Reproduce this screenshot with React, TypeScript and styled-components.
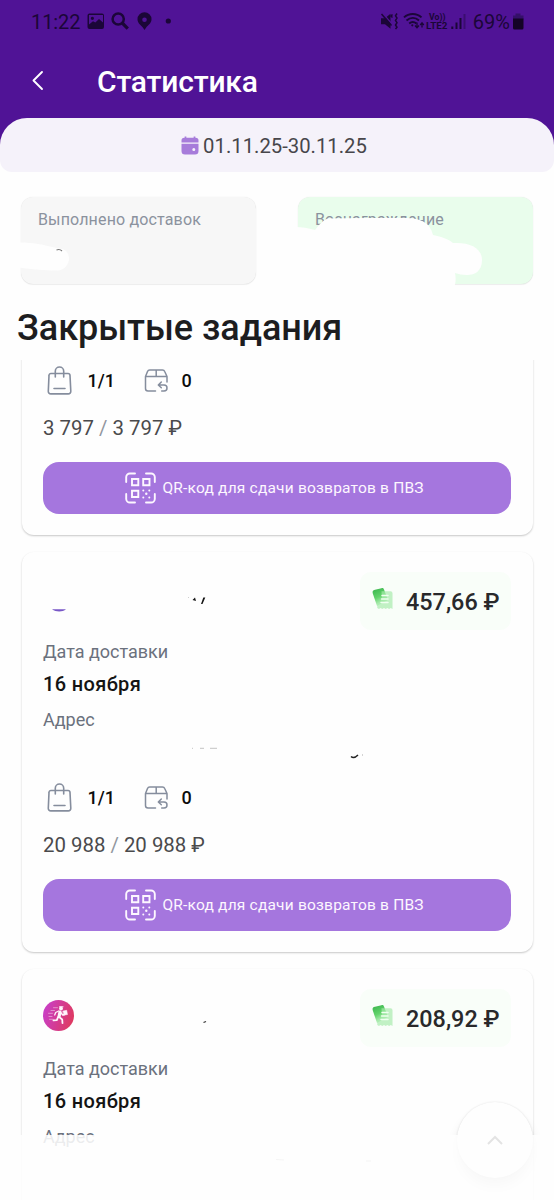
import React from "react";
import styled, { createGlobalStyle } from "styled-components";

const Global = createGlobalStyle`
  * { box-sizing: border-box; }
  body { margin: 0; background: #fefefe; font-family: Roboto, "Liberation Sans", sans-serif; }
`;

const Screen = styled.main`
  position: relative;
  width: 554px;
  height: 1200px;
  overflow: hidden;
  display: flex;
  flex-direction: column;
  background: #fefefe;
`;
const Top = styled.header`
  height: 146px;
  flex: none;
  background: #501396;
`;
const StatusBar = styled.div`
  height: 44px;
  padding: 0 29px 0 31px;
  display: flex;
  justify-content: space-between;
  color: #1b0638;
  font-size: 20px;
  line-height: 45px;
`;
const StatusGroup = styled.div`
  display: flex;
`;
const Clock = styled.span`
  width: 55px;
  letter-spacing: -0.1px;
`;
const Charge = styled.span`
  margin-right: 1px;
`;
const TitleBar = styled.div`
  display: flex;
  align-items: center;
  height: 74px;
  padding-left: 28px;
`;
const Title = styled.h1`
  margin: 1px 0 0 50px;
  color: #fff;
  font-size: 30px;
  line-height: 40px;
  font-weight: 500;
  letter-spacing: -0.2px;
`;
const Period = styled.div`
  flex: none;
  height: 54px;
  margin-top: -28px;
  border-radius: 27px 27px 12px 12px;
  background: #f5f2fa;
  display: flex;
  justify-content: center;
  align-items: center;
  gap: 4px;
  padding: 2px 6px 0 0;
  color: #47464b;
  font-size: 20.3px;
`;
const Stats = styled.section`
  flex: none;
  display: flex;
  justify-content: space-between;
  height: 87px;
  margin: 24.5px 21px 0;
`;
const Stat = styled.div<{ $green?: boolean }>`
  position: relative;
  width: 235px;
  padding: 11px 17px;
  border-radius: 12px;
  background: ${(p) => (p.$green ? "#e9fdec" : "#f7f7f7")};
  box-shadow: 0 0 1px rgba(0, 0, 0, 0.12), 0 1px 1px rgba(0, 0, 0, 0.06);
  color: #8b929e;
  font-size: 16px;
  letter-spacing: 0.15px;
  line-height: 24px;
`;
const Brush = styled.svg`
  position: absolute;
  overflow: visible;
  left: 0;
  top: 0;
`;
const Heading = styled.h2`
  flex: none;
  margin: 23.5px 0 0 17px;
  height: 53px;
  font-size: 36px;
  line-height: 42px;
  font-weight: 500;
  letter-spacing: -0.05px;
  color: #1d1d1f;
`;
const List = styled.section`
  flex: 1;
  min-height: 0;
  overflow: hidden;
`;
const Scroll = styled.div`
  display: flex;
  flex-direction: column;
  gap: 17px;
  margin: -225px 21px 0 22px;
`;
const Card = styled.article`
  position: relative;
  height: 400px;
  padding: 20px 22px 0 21px;
  border-radius: 12px;
  background: #fefefe;
  box-shadow: 0 1px 2px rgba(0, 0, 0, 0.22);
`;
const CardHead = styled.div`
  display: flex;
  justify-content: space-between;
  height: 58px;
  margin-bottom: 10px;
`;
const Courier = styled.div`
  padding-top: 10.5px;
`;
const Reward = styled.div`
  margin-left: auto;
  width: 151px;
  height: 58px;
  padding: 15px 0 0 12px;
  border-radius: 11px;
  background: #f9fef9;
  display: flex;
  align-items: flex-start;
  gap: 12px;
  color: #29292b;
  font-size: 23.4px;
  line-height: 31px;
  font-weight: 500;
  white-space: nowrap;
`;
const Label = styled.div`
  height: 24px;
  line-height: 24px;
  color: #6b717d;
  font-size: 18px;
`;
const DateText = styled.div`
  margin: 6px 0 10px;
  line-height: 28px;
  color: #141414;
  font-size: 20px;
  font-weight: 500;
  letter-spacing: 0.35px;
`;
const Address = styled.div`
  height: 50px;
`;
const Counts = styled.div`
  display: flex;
  align-items: center;
  height: 32px;
  color: #0c0c0c;
  font-size: 18px;
  font-weight: 500;
`;
const Count = styled.span`
  width: 68px;
  padding: 0 0 2px 12.5px;
`;
const Sum = styled.div`
  margin: 19px 0 22px;
  line-height: 24px;
  height: 24px;
  color: #4a4a4c;
  font-size: 20.4px;
  white-space: pre;
`;
const Slash = styled.span`
  color: #92979f;
`;
const QrButton = styled.button`
  width: 468px;
  height: 52px;
  border: 0;
  border-radius: 16px;
  background: #a576de;
  display: flex;
  align-items: center;
  gap: 6.5px;
  padding: 0 0 0 82px;
  color: #fdf7ff;
  font-family: inherit;
  font-size: 15.5px;
  letter-spacing: 0.2px;
  white-space: nowrap;
`;
const Veil = styled.div`
  position: absolute;
  left: 0;
  right: 0;
  bottom: 0;
  height: 65px;
  background: rgba(254, 254, 254, 0.87);
`;
const UpButton = styled.button`
  position: absolute;
  right: 21px;
  bottom: 22px;
  width: 76px;
  height: 76px;
  padding: 0;
  border: 0;
  border-radius: 50%;
  background: #fefefe;
  box-shadow: 0 0 2px rgba(0, 0, 0, 0.12), 0 10px 14px -3px rgba(0, 0, 0, 0.2);
  display: flex;
  align-items: center;
  justify-content: center;
`;

const StatusLeft = () => (
  <svg width="90" height="44" viewBox="87 0 90 44" fill="none">
    <path fill="#1b0638" fillRule="evenodd" d="M90.5 13.5h12.5a2 2 0 0 1 2 2v11.5a2 2 0 0 1-2 2H90.5a2 2 0 0 1-2-2V15.5a2 2 0 0 1 2-2zM90 24.5l4-3.2 2.3 1.3 3.7-3.7 4 3.7V15H90zM93.4 16.7a1.6 1.6 0 1 1 0 3.2 1.6 1.6 0 0 1 0-3.2z" />
    <circle cx="119.2" cy="19" r="5.6" stroke="#1b0638" strokeWidth="2.5" />
    <path d="M123.200 23l5.600 5.600" stroke="#1b0638" strokeWidth="3.200" />
    <path fill="#1b0638" fillRule="evenodd" d="M145.500 12.300a7 7 0 0 1 7 7c0 4-3.300 5.600-5.300 8.300L145.500 30l-1.700-2.400c-2-2.700-5.300-4.300-5.300-8.300a7 7 0 0 1 7-7zm0 5.200a2.300 2.300 0 1 0 0 4.600 2.300 2.300 0 0 0 0-4.600z" />
    <circle cx="169.300" cy="21" r="2.600" fill="#1b0638" />
  </svg>
);
const StatusRight = () => (
  <svg width="93" height="44" viewBox="380 0 93 44" fill="none" stroke="#1b0638">
    <path d="M381 18.300h4l5.500-4.500v15l-5.500-4.500h-4z" fill="#1b0638" stroke="none" />
    <path d="M382.500 13l9.500 11" stroke="#501396" strokeWidth="1.200" />
    <path d="M381.500 14l10 11.500" strokeWidth="1.500" />
    <path d="M392.500 14.500l-1.500 1.500 1.500 1.500M397 13.500l-1.500 2.300 1.500 2.300-1.500 2.300 1.500 2.300-1.500 2.300 1.500 2.300-1.500 1.800" strokeWidth="1.500" />
    <path d="M404 17.400c5-4.600 12.500-4.600 17.500 0M406.500 20.500c4-3.400 8.800-3.400 12.500 0M409.200 23.500c2.300-1.900 5-1.900 7.200 0" strokeWidth="1.900" />
    <circle cx="412.300" cy="25.300" r="1.100" fill="#1b0638" stroke="none" />
    <path d="M417 22.500v5M415 25.500l2 2.300 2-2.300M422 27.500v-5M420.200 25l1.800-2.300 1.800 2.300" strokeWidth="1.300" />
    <g fill="#1b0638" stroke="none" fontFamily="Roboto, sans-serif" fontWeight="700">
      <text x="429" y="19.600" fontSize="8.500" textLength="16.500" lengthAdjust="spacingAndGlyphs">Vo))</text>
      <text x="426" y="28.800" fontSize="9" textLength="21.500" lengthAdjust="spacingAndGlyphs">LTE2</text>
    </g>
    <path d="M452.300 29v-2.600M456.500 29v-6.500M460.500 29v-11" strokeWidth="2" />
    <path d="M464.500 29V14" strokeWidth="2" opacity=".4" />
  </svg>
);
const Battery = () => (
  <svg width="14" height="44" viewBox="0 0 14 44">
    <path d="M4.500 13.500h5v2h3v4H2v-4h2.500z" fill="#341069" />
    <path d="M2 18.500H12.500V28a1.500 1.500 0 0 1-1.500 1.500H3.500A1.500 1.500 0 0 1 2 28z" fill="#140326" />
  </svg>
);
const Calendar = () => (
  <svg width="18" height="20" viewBox="0 0 18 20">
    <path d="M4.500 .5v3M13.500 .5v3" stroke="#a77cda" strokeWidth="1.700" />
    <path d="M0.500 6.500V4.500a2.800 2.800 0 0 1 2.800-2.800h11.400A2.800 2.800 0 0 1 17.500 4.500v2z" fill="#a77cda" />
    <path fillRule="evenodd" d="M.500 7.800h17v7.200a3.500 3.500 0 0 1-3.500 3.500H4a3.500 3.500 0 0 1-3.500-3.500zM12.800 12a1.500 1.500 0 1 0 0 3 1.500 1.500 0 0 0 0-3z" fill="#a77cda" />
  </svg>
);
const Receipt = () => (
  <svg width="22" height="24" viewBox="0 0 22 24">
    <defs>
      <linearGradient id="leaf" x1="0" y1="0" x2=".4" y2="1">
        <stop offset="0" stopColor="#37b34b" />
        <stop offset=".55" stopColor="#62d36b" />
        <stop offset="1" stopColor="#c9f5cb" />
      </linearGradient>
    </defs>
    <path d="M3 2.800L9.500 1.200c1.200-.300 2 .200 2.500 1.300l4 10.400L5 19 .800 6.500C.200 4.300.800 3.300 3 2.800z" fill="url(#leaf)" />
    <path d="M9.500 4.200H18.500a2 2 0 0 1 2 2V22l-1.700-1-1.700 1-1.700-1-1.700 1-1.700-1-1.700 1-1.700-1-1.700 1-1.600-1V17c2.500-1 4-3 4.500-6z" fill="#a6eaab" fillOpacity=".68" />
    <path d="M10 8.500h6M9.500 12h6.500M9 15.500h7" stroke="#effff0" strokeWidth="1.500" strokeLinecap="round" />
  </svg>
);
const Bag = () => (
  <svg width="32" height="32" viewBox="0 0 32 32" fill="none" stroke="#858d9d" strokeWidth="1.600" strokeLinecap="round" strokeLinejoin="round">
    <path d="M8 8.500h17a2 2 0 0 1 2 1.900l.800 15.800a2.500 2.500 0 0 1-2.500 2.700H7.800a2.500 2.500 0 0 1-2.500-2.700l.700-15.800A1.900 1.900 0 0 1 8 8.500z" />
    <path d="M12.300 12V6.200a4.200 4.200 0 0 1 8.400 0V12M11 23.500h11" />
  </svg>
);
const Return = () => (
  <svg width="26" height="26" viewBox="0 0 26 26" fill="none" stroke="#858d9d" strokeWidth="1.500" strokeLinecap="round" strokeLinejoin="round">
    <path d="M12.500 23H5A2.500 2.500 0 0 1 2.500 20.500V8.500l2-5A2.400 2.400 0 0 1 6.700 2h12.800a2.400 2.400 0 0 1 2.200 1.500L24 8.500V14M2.700 8.500h21M13.200 2v6.500" />
    <path d="M18.300 14L15.300 17l3 2.800M15.500 17h5.500a3 3 0 0 1 0 6h-2.300" />
  </svg>
);
const Qr = () => (
  <svg width="31" height="32" viewBox="0 0 31 32" fill="none" stroke="#fdf7ff">
    <path d="M1.200 10V5A3.700 3.700 0 0 1 5 1.500h5M21 1.500h5A3.700 3.700 0 0 1 29.800 5v5M29.800 22v5a3.700 3.700 0 0 1-3.800 3.500h-5M10 30.500H5A3.700 3.700 0 0 1 1.200 27v-5" strokeWidth="1.900" strokeLinecap="round" />
    <path d="M7 7h6.300v6.300H7zM18.200 7h6.300v6.300h-6.300zM7 18.700h6.300V25H7z" strokeWidth="1.900" />
    <g fill="#fdf7ff" stroke="none">
      <circle cx="18.300" cy="18.500" r="1" /><circle cx="24.300" cy="18.500" r="1" /><circle cx="21.300" cy="21.800" r="1.200" />
      <circle cx="18.300" cy="25.500" r="1" /><circle cx="24.300" cy="25.500" r="1" />
    </g>
  </svg>
);
const Runner = () => (
  <svg width="31" height="31" viewBox="0 0 31 31" fill="none" stroke="#fff5fb" strokeLinecap="round" strokeLinejoin="round">
    <defs>
      <linearGradient id="courier" x1="0" y1=".3" x2="1" y2=".6">
        <stop offset="0" stopColor="#c83fc9" />
        <stop offset="1" stopColor="#df395f" />
      </linearGradient>
    </defs>
    <circle cx="15.500" cy="15.500" r="15.500" fill="url(#courier)" stroke="none" />
    <path d="M10.500 7.700h4M8 10.500h3.500M5.500 13.300h4M6 16.500h3M6.500 19.300h3.500" strokeWidth=".6" opacity=".75" />
    <circle cx="18" cy="8.500" r="1.900" fill="#fff5fb" stroke="none" />
    <path d="M16.500 6.800h3.500" strokeWidth="1" />
    <path d="M17 12l-.8 4" strokeWidth="3.200" />
    <path d="M15.700 11l-3 1.500-1 2.500M17.700 12.500l2 2.500 2-.5" strokeWidth="1.300" />
    <path d="M15.200 16.800l-1.400 3.400-3.300.2M16.500 17.300l2.700 2.200.3 3.700" strokeWidth="1.800" />
    <path d="M20 11l3.700-.7.800 4.200-3.700.7z" fill="#fff5fb" strokeWidth=".5" />
  </svg>
);

type Task = { sum: string; reward: string; marks?: React.ReactNode; courier?: boolean };

const tasks: Task[] = [
  { sum: "3 797", reward: "457,66" },
  {
    sum: "20 988",
    reward: "457,66",
    marks: (
      <>
        <path d="M30 57.300h14c-3.500 3-10 3-14 0z" fill="#7857c7" />
        <path d="M170.500 48l2.500-2.500 1 3.500zM179 52l2.300-6.500h2L180.500 52z" fill="#151515" />
        <path d="M166 45.500h1M170 196.300h1M178 196.300h4M188 196.300h7" stroke="#cfcfcf" strokeWidth="1.200" />
        <path d="M329 204.500c2 1.800 4 1.500 7-1.500" fill="none" stroke="#222" strokeWidth="1.500" />
        <path d="M340 203h1" stroke="#aaa" />
      </>
    ),
  },
  {
    sum: "20 988",
    reward: "208,92",
    courier: true,
    marks: (
      <>
        <path d="M181.500 53.500l2.500-1" stroke="#333" strokeWidth="1.300" />
        <path d="M254 190.500l8 .5M344 192h5" stroke="#b5b5b5" />
      </>
    ),
  },
];

const TaskCard = ({ sum, reward, marks, courier }: Task) => (
  <Card>
    <CardHead>
      {courier && <Courier><Runner /></Courier>}
      <Reward><Receipt /><span>{reward} ₽</span></Reward>
    </CardHead>
    <Label>Дата доставки</Label>
    <DateText>16 ноября</DateText>
    <Label>Адрес</Label>
    <Address />
    <Counts>
      <Bag />
      <Count>1/1</Count>
      <Return />
      <Count>0</Count>
    </Counts>
    <Sum>{sum} <Slash>/</Slash> {sum} ₽</Sum>
    <QrButton><Qr />QR-код для сдачи возвратов в ПВЗ</QrButton>
    {marks && <Brush width="511" height="400" viewBox="0 0 511 400">{marks}</Brush>}
  </Card>
);

export default function App() {
  return (
    <Screen>
      <Global />
      <Top>
        <StatusBar>
          <StatusGroup><Clock>11:22</Clock><StatusLeft /></StatusGroup>
          <StatusGroup><StatusRight /><Charge>69%</Charge><Battery /></StatusGroup>
        </StatusBar>
        <TitleBar>
          <svg width="19" height="24" viewBox="0 0 19 24" fill="none">
            <path d="M14 3L5.500 11.500 14 20" stroke="#fff" strokeWidth="1.900" strokeLinecap="round" strokeLinejoin="round" />
          </svg>
          <Title>Статистика</Title>
        </TitleBar>
      </Top>
      <Period><Calendar />01.11.25-30.11.25</Period>
      <Stats>
        <Stat>
          Выполнено доставок
          <Brush width="235" height="87">
            <path d="M-2 45.500c14 0 24 2 39 6 8 0 11 5 11 10s-4 12-12 12c-13 0-24-1-38-3z" fill="#fefefe" />
            <path d="M35.500 53c2-.8 4-.5 5.500 1" stroke="#777" strokeWidth="1.100" fill="none" />
          </Brush>
        </Stat>
        <Stat $green>
          Вознаграждение
          <Brush width="235" height="87">
            <path d="M-3 30c7 0 13 1 20 3 4-5 8-10 13-11.500 26-1 52-.5 78-.5 15 0 24 5 27 17 9 2 15 4 20 8 17-1 29 5 29 17 0 11-7 15-15 15-5 0-8-1-12-2 1 5 1 9-1 15H-3z" fill="#fefefe" />
          </Brush>
        </Stat>
      </Stats>
      <Heading>Закрытые задания</Heading>
      <List>
        <Scroll>{tasks.map((task, i) => <TaskCard key={i} {...task} />)}</Scroll>
      </List>
      <UpButton aria-label="Наверх">
        <svg width="18" height="12" viewBox="0 0 18 12" fill="none">
          <path d="M2 10l7-7 7 7" stroke="#333" strokeWidth="2" />
        </svg>
      </UpButton>
      <Veil />
    </Screen>
  );
}
